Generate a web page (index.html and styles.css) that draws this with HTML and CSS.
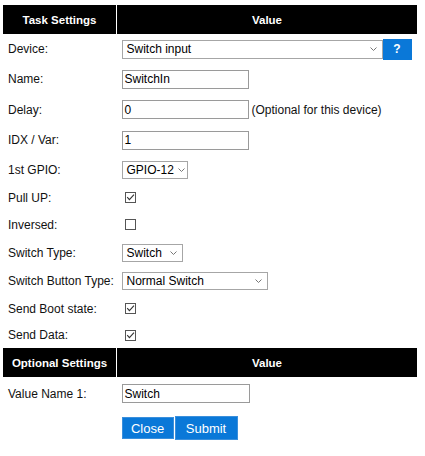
FILE: index.html
```
<!DOCTYPE html>
<html>
<head>
<meta charset="utf-8">
<link rel="stylesheet" href="styles.css">
</head>
<body>
<div class="page">
<table class="settings">
  <tr class="head"><th class="col-label">Task Settings</th><th class="col-value">Value</th></tr>
  <tr class="h30"><td class="label">Device:</td><td class="value"><div class="field"><span class="select sel-device">Switch input<svg class="chev" width="7" height="4" viewBox="0 0 7 4"><polyline points="0.5,0.5 3.5,3.5 6.5,0.5" fill="none" stroke="#777" stroke-width="1"/></svg></span><span class="help">?</span></div></td></tr>
  <tr class="h30"><td class="label">Name:</td><td class="value"><div class="field"><span class="input">SwitchIn</span></div></td></tr>
  <tr class="h31"><td class="label">Delay:</td><td class="value"><div class="field"><span class="input">0</span><span class="note">(Optional for this device)</span></div></td></tr>
  <tr class="h30"><td class="label">IDX / Var:</td><td class="value"><div class="field"><span class="input">1</span></div></td></tr>
  <tr class="h29"><td class="label">1st GPIO:</td><td class="value"><div class="field"><span class="select sel-gpio">GPIO-12<svg class="chev" width="7" height="4" viewBox="0 0 7 4"><polyline points="0.5,0.5 3.5,3.5 6.5,0.5" fill="none" stroke="#777" stroke-width="1"/></svg></span></div></td></tr>
  <tr class="h27"><td class="label">Pull UP:</td><td class="value"><div class="field"><svg class="check" width="11" height="11" viewBox="0 0 11 11"><rect x="0.5" y="0.5" width="10" height="10" fill="#fff" stroke="#555"/><polyline points="2.2,5.2 4.4,7.6 9,2.6" fill="none" stroke="#333" stroke-width="1.1"/></svg></div></td></tr>
  <tr class="h27"><td class="label">Inversed:</td><td class="value"><div class="field"><svg class="check" width="11" height="11" viewBox="0 0 11 11"><rect x="0.5" y="0.5" width="10" height="10" fill="#fff" stroke="#555"/></svg></div></td></tr>
  <tr class="h29"><td class="label">Switch Type:</td><td class="value"><div class="field"><span class="select sel-type">Switch<svg class="chev" width="7" height="4" viewBox="0 0 7 4"><polyline points="0.5,0.5 3.5,3.5 6.5,0.5" fill="none" stroke="#777" stroke-width="1"/></svg></span></div></td></tr>
  <tr class="h28"><td class="label">Switch Button Type:</td><td class="value"><div class="field"><span class="select sel-button">Normal Switch<svg class="chev" width="7" height="4" viewBox="0 0 7 4"><polyline points="0.5,0.5 3.5,3.5 6.5,0.5" fill="none" stroke="#777" stroke-width="1"/></svg></span></div></td></tr>
  <tr class="h27"><td class="label">Send Boot state:</td><td class="value"><div class="field"><svg class="check" width="11" height="11" viewBox="0 0 11 11"><rect x="0.5" y="0.5" width="10" height="10" fill="#fff" stroke="#555"/><polyline points="2.2,5.2 4.4,7.6 9,2.6" fill="none" stroke="#333" stroke-width="1.1"/></svg></div></td></tr>
  <tr class="h26"><td class="label">Send Data:</td><td class="value"><div class="field"><svg class="check" width="11" height="11" viewBox="0 0 11 11"><rect x="0.5" y="0.5" width="10" height="10" fill="#fff" stroke="#555"/><polyline points="2.2,5.2 4.4,7.6 9,2.6" fill="none" stroke="#333" stroke-width="1.1"/></svg></div></td></tr>
  <tr class="head"><th class="col-label">Optional Settings</th><th class="col-value">Value</th></tr>
  <tr class="h33"><td class="label">Value Name 1:</td><td class="value"><div class="field"><span class="input wide">Switch</span></div></td></tr>
  <tr><td class="label"></td><td class="value actions"><div class="field top"><span class="btn btn-close">Close</span><span class="btn btn-submit">Submit</span></div></td></tr>
</table>
</div>
</body>
</html>
```
FILE: styles.css
```
html, body {
  margin: 0;
  padding: 0;
  background: #fff;
}
body {
  font-family: "Liberation Sans", Arial, sans-serif;
  font-size: 12px;
  color: #111;
}
.page {
  padding: 5px 0 0 3px;
}
.settings {
  width: 414px;
  border-collapse: collapse;
  border-spacing: 0;
}
.settings td, .settings th {
  padding: 0;
}
.head th {
  height: 29px;
  background: #000;
  color: #fff;
  font-weight: bold;
  font-size: 11.5px;
  text-align: center;
  vertical-align: middle;
}
.head .col-label {
  width: 113px;
  border-right: 1px solid #fff;
}
.label {
  width: 113px;
  padding-left: 5px !important;
  box-sizing: border-box;
  vertical-align: middle;
  white-space: nowrap;
}
.value {
  padding-left: 5px !important;
  vertical-align: middle;
  white-space: nowrap;
}
.h26 td { height: 26px; }
.h27 td { height: 27px; }
.h28 td { height: 28px; }
.h29 td { height: 29px; }
.h30 td { height: 30px; }
.h31 td { height: 31px; }
.h33 td { height: 33px; }
.field {
  display: flex;
  align-items: center;
}
.input {
  box-sizing: border-box;
  flex: none;
  width: 127px;
  height: 19px;
  border: 1px solid #9a9a9a;
  padding: 0 2px;
  display: flex;
  align-items: center;
  font-size: 12px;
  color: #000;
  background: #fff;
}
.input.wide { width: 128px; }
.note {
  margin-left: 3px;
}
.select {
  box-sizing: border-box;
  flex: none;
  height: 18px;
  border: 1px solid #a6a6a6;
  padding: 0 5px 0 4px;
  display: flex;
  align-items: center;
  justify-content: space-between;
  white-space: nowrap;
  color: #000;
  background: #fff;
}
.chev { flex: none; margin-left: 4px; }
.sel-device { width: 261px; height: 19px; }
.sel-gpio { width: 66px; }
.sel-type { width: 61px; }
.sel-button { width: 146px; }
.help {
  box-sizing: border-box;
  flex: none;
  width: 29px;
  height: 21px;
  background: #0a78d8;
  color: #fff;
  font-weight: bold;
  font-size: 12px;
  display: flex;
  align-items: center;
  justify-content: center;
}
.check { display: block; margin-left: 3px; }
.actions { padding-top: 6px !important; }
.field.top { align-items: flex-start; gap: 1px; }
.btn {
  box-sizing: border-box;
  flex: none;
  display: flex;
  align-items: center;
  justify-content: center;
  background: #0a78d8;
  color: #fff;
  font-size: 13px;
  border: 1px solid #3a8fdc;
}
.btn-close { width: 52px; height: 22px; margin-top: 1px; }
.btn-submit { width: 63px; height: 24px; }
```
